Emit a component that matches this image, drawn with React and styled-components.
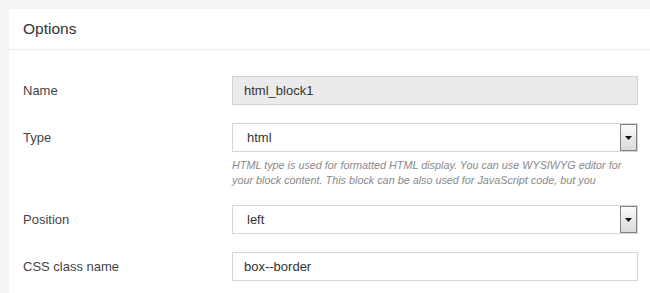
import React from "react";
import styled, { createGlobalStyle } from "styled-components";

const Global = createGlobalStyle`
  html, body { margin: 0; padding: 0; background: #f4f4f4; }
  body { font-family: "Liberation Sans", Arial, sans-serif; }
`;

const Page = styled.div`
  padding: 9px 0 0 9px;
  min-height: 293px;
  box-sizing: border-box;
`;

const Panel = styled.section`
  background: #fff;
  min-height: 284px;
`;

const Header = styled.header`
  height: 40px;
  border-bottom: 1px solid #ececec;
  display: flex;
  align-items: center;
  padding: 0 14px;
  font-size: 15.5px;
  color: #333;
`;

const Body = styled.div`
  padding: 26px 12px 0 14px;
  display: flex;
  flex-direction: column;
  gap: 18px;
`;

const Row = styled.div`
  display: grid;
  grid-template-columns: 209px 1fr;
  align-items: start;
`;

const Label = styled.label`
  font-size: 13px;
  color: #444;
  height: 29px;
  display: flex;
  align-items: center;
`;

const Field = styled.div`
  display: flex;
  flex-direction: column;
`;

const Input = styled.div`
  height: 29px;
  box-sizing: border-box;
  border: 1px solid ${p => (p.$readOnly ? "#d0d0d0" : "#d6d6d6")};
  background: ${p => (p.$readOnly ? "#ebebeb" : "#fff")};
  display: flex;
  align-items: center;
  padding-left: 11px;
  font-size: 13px;
  color: #333;
`;

const Select = styled.div`
  height: 29px;
  box-sizing: border-box;
  border: 1px solid #d6d6d6;
  background: #fff;
  display: flex;
  align-items: stretch;
  font-size: 13px;
  color: #333;
`;

const SelectText = styled.span`
  flex: 1;
  display: flex;
  align-items: center;
  padding-left: 14px;
`;

const SelectButton = styled.span`
  width: 15px;
  border: 1px solid #828282;
  background: linear-gradient(#fbfbfb, #dadada);
  display: flex;
  align-items: center;
  justify-content: center;
`;

const Help = styled.p`
  margin: 6px 0 -1px;
  font-size: 10.8px;
  line-height: 15px;
  font-style: italic;
  color: #8a8a8a;
`;

const Arrow = () => (
  <svg width="7" height="4" viewBox="0 0 7 4">
    <path d="M0 0 H7 L3.5 4 Z" fill="#111" />
  </svg>
);

const SelectBox = ({ value }) => (
  <Select>
    <SelectText>{value}</SelectText>
    <SelectButton>
      <Arrow />
    </SelectButton>
  </Select>
);

export default function App() {
  return (
    <>
      <Global />
      <Page>
        <Panel>
          <Header>Options</Header>
          <Body>
            <Row>
              <Label>Name</Label>
              <Field>
                <Input $readOnly>html_block1</Input>
              </Field>
            </Row>
            <Row>
              <Label>Type</Label>
              <Field>
                <SelectBox value="html" />
                <Help>
                  HTML type is used for formatted HTML display. You can use WYSIWYG editor for
                  your block content. This block can be also used for JavaScript code, but you
                </Help>
              </Field>
            </Row>
            <Row>
              <Label>Position</Label>
              <Field>
                <SelectBox value="left" />
              </Field>
            </Row>
            <Row>
              <Label>CSS class name</Label>
              <Field>
                <Input>box--border</Input>
              </Field>
            </Row>
          </Body>
        </Panel>
      </Page>
    </>
  );
}
